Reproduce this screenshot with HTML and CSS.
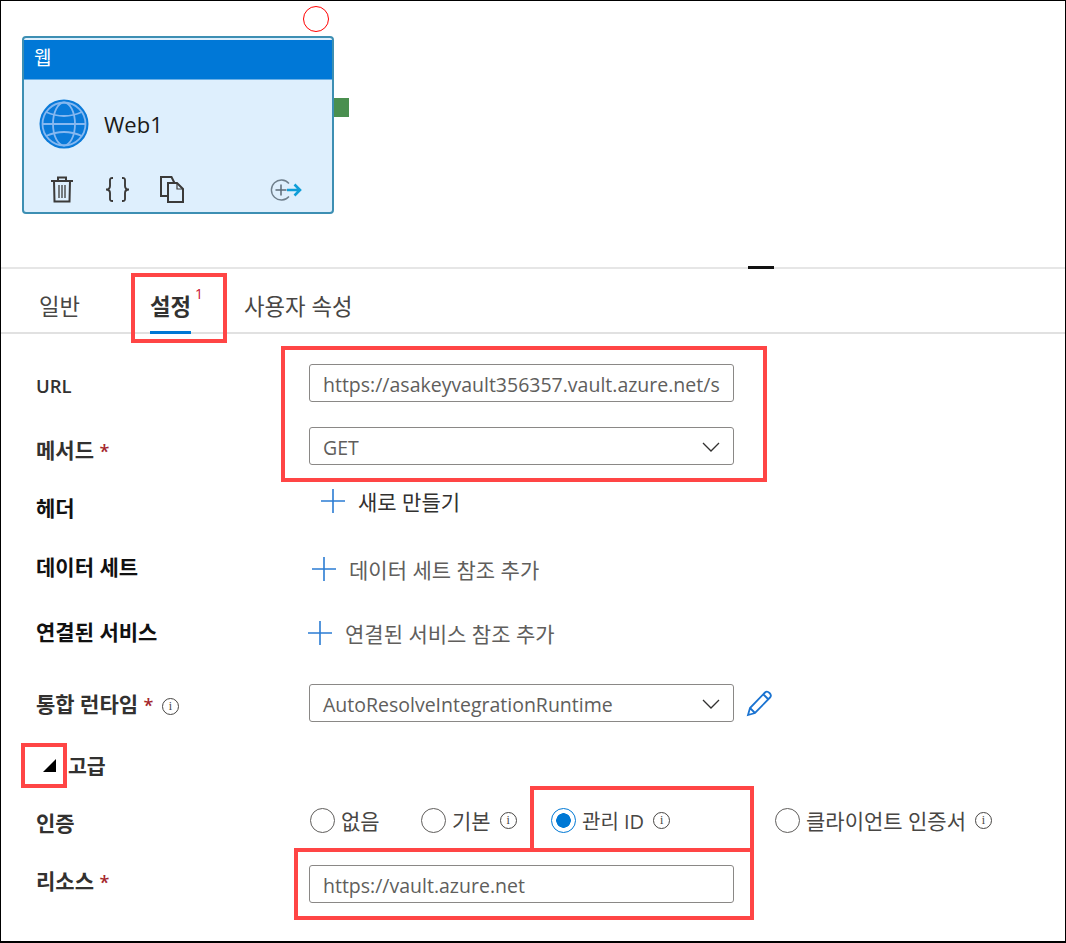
FILE: index.html
```html
<!DOCTYPE html>
<html lang="ko">
    <head>
        <meta charset="UTF-8" />
        <meta name="viewport" content="width=device-width, initial-scale=1.0" />
        <title>Web1</title>
        <link rel="stylesheet" href="styles.css">
    </head>
    <body>
        <div class="frame">
            <!-- pipeline canvas -->
            <div class="canvas">
                <div class="status-ring"></div>
                <div class="node">
                    <div class="node-head">웹</div>
                    <div class="node-main">
                        <svg class="globe" width="50" height="50" viewBox="0 0 50 50">
                            <circle cx="25" cy="25" r="24.500" fill="#0a7ad9"/>
                            <g fill="none" stroke="#86b8f0" stroke-width="1.800">
                                <circle cx="25" cy="25" r="21.500"/>
                                <ellipse cx="25" cy="25" rx="11" ry="21.500"/>
                                <path d="M3.500 25h43M7 13q18 8 36 0M7 37q18-8 36 0"/>
                            </g>
                        </svg>
                        <span class="node-name">Web1</span>
                    </div>
                    <div class="node-tools">
                        <svg class="tool-trash" width="22" height="27" viewBox="0 0 22 27" fill="none" stroke="#3b3a39" stroke-width="2">
                            <path d="M0 5h22M7 5V1.500h8V5M3 5l.5 20.500h15L19 5"/>
                            <path d="M8 9v13M11 9v13M14 9v13" stroke-width="1.300"/>
                        </svg>
                        <svg class="tool-code" width="25" height="25" viewBox="0 0 25 25" fill="none" stroke="#3b3a39" stroke-width="1.900">
                            <path d="M8 1H7C4.500 1 5 3 5 6v3c0 2-1 3.500-4 3.500 3 0 4 1.500 4 3.500v3c0 3-.5 5 2 5h1M17 1h1c2.500 0 2 2 2 5v3c0 2 1 3.500 4 3.500-3 0-4 1.500-4 3.500v3c0 3 .5 5-2 5h-1"/>
                        </svg>
                        <svg class="tool-copy" width="25" height="27" viewBox="0 0 25 27" fill="none" stroke="#3b3a39" stroke-width="2">
                            <path d="M8 20H1V1h10.500l3 6M8 7h9l6 6v13H8z"/>
                            <path d="M17 7v6h6" stroke-width="1.200"/>
                        </svg>
                        <svg class="tool-add" width="34" height="24" viewBox="0 0 34 24" fill="none">
                            <path d="M19 5.500A10 10 0 1 0 19 18.500" stroke="#6f7f8c" stroke-width="1.400"/>
                            <path d="M5.500 12h11M11 6.500v11" stroke="#5c6b77" stroke-width="1.500"/>
                            <path d="M17 12h13M24.500 6.500l5.500 5.500-5.500 5.500" stroke="#0f9ed8" stroke-width="2.600"/>
                        </svg>
                    </div>
                    <div class="node-port"></div>
                </div>
                <div class="splitter-handle"></div>
            </div>

            <div class="tabs">
                <span class="tab">일반</span>
                <span class="tab tab-active">설정<sup class="tab-badge">1</sup></span>
                <span class="tab">사용자 속성</span>
            </div>

            <div class="form">
                <div class="row row-url">
                    <label class="field-label">URL</label>
                    <div class="field">
                        <div class="box">https://asakeyvault356357.vault.azure.net/s</div>
                    </div>
                </div>
                <div class="row row-method">
                    <label class="field-label">메서드 <span class="req">*</span></label>
                    <div class="field">
                        <div class="box">GET
                            <svg class="chevron" width="18" height="10" viewBox="0 0 18 10"><path d="M1 1l8 8 8-8" fill="none" stroke="#323130" stroke-width="1.300"/></svg>
                        </div>
                    </div>
                </div>
                <div class="row row-header">
                    <label class="field-label strong">헤더</label>
                    <div class="add-link add-dark">
                        <svg class="plus" width="24" height="24" viewBox="0 0 24 24"><path d="M0 12h24M12 0v24" stroke="#2b7cd3" stroke-width="1.600"/></svg>
                        새로 만들기
                    </div>
                </div>
                <div class="row row-dataset">
                    <label class="field-label strong">데이터 세트</label>
                    <div class="add-link">
                        <svg class="plus" width="24" height="24" viewBox="0 0 24 24"><path d="M0 12h24M12 0v24" stroke="#2b7cd3" stroke-width="1.600"/></svg>
                        데이터 세트 참조 추가
                    </div>
                </div>
                <div class="row row-linked">
                    <label class="field-label strong">연결된 서비스</label>
                    <div class="add-link">
                        <svg class="plus" width="24" height="24" viewBox="0 0 24 24"><path d="M0 12h24M12 0v24" stroke="#2b7cd3" stroke-width="1.600"/></svg>
                        연결된 서비스 참조 추가
                    </div>
                </div>
                <div class="row row-runtime">
                    <label class="field-label">통합 런타임 <span class="req">*</span> <i class="info">i</i></label>
                    <div class="field">
                        <div class="box">AutoResolveIntegrationRuntime
                            <svg class="chevron" width="18" height="10" viewBox="0 0 18 10"><path d="M1 1l8 8 8-8" fill="none" stroke="#323130" stroke-width="1.300"/></svg>
                        </div>
                        <svg class="pencil" width="28" height="28" viewBox="0 0 28 28" fill="none" stroke="#1a73d1" stroke-width="1.800">
                            <path d="M2 26l2-7L19 3.500q2-2 4.500.5t.5 4.500L9 24zM4 19l5 5M17.500 5.500l5 5"/>
                        </svg>
                    </div>
                </div>
                <div class="row row-advanced">
                    <div class="advanced-title"><span class="caret"></span>고급</div>
                </div>
                <div class="row row-auth">
                    <label class="field-label">인증</label>
                    <div class="radios">
                        <span class="radio-item item-none"><span class="radio"></span>없음</span>
                        <span class="radio-item item-basic"><span class="radio"></span>기본 <i class="info">i</i></span>
                        <span class="radio-item item-managed"><span class="radio radio-on"></span>관리 ID <i class="info">i</i></span>
                        <span class="radio-item"><span class="radio"></span>클라이언트 인증서 <i class="info">i</i></span>
                    </div>
                </div>
                <div class="row row-resource">
                    <label class="field-label">리소스 <span class="req">*</span></label>
                    <div class="field">
                        <div class="box">https://vault.azure.net</div>
                    </div>
                </div>
            </div>

            <!-- callouts drawn over the screenshot -->
            <div class="callout callout-tab"></div>
            <div class="callout callout-url"></div>
            <div class="callout callout-caret"></div>
            <div class="callout callout-managed"></div>
            <div class="callout callout-resource"></div>
        </div>
    </body>
</html>
```

FILE: styles.css
```css
* {
    box-sizing: border-box;
}

body {
    margin: 0;
    background-color: white;
    font-family: "Open Sans", "Noto Sans CJK KR", sans-serif;
    color: #323130;
}

.frame {
    position: relative;
    width: 1066px;
    height: 943px;
    border: 1px solid #000;
    border-bottom-width: 2px;
    overflow: hidden;
}

.canvas {
    position: relative;
    height: 266px;
}

.status-ring {
    position: absolute;
    left: 302px;
    top: 5px;
    width: 26px;
    height: 26px;
    border: 1.500px solid #f00;
    border-radius: 50%;
}

.node {
    position: absolute;
    left: 21px;
    top: 35px;
    width: 312px;
    height: 178px;
    border: 2px solid #3d8fb3;
    border-radius: 4px;
    background-color: #deeffd;
}

.node-head {
    height: 40px;
    margin-top: 2px;
    padding-left: 10px;
    background-color: #0078d7;
    color: white;
    font-size: 19px;
    line-height: 36px;
    border-bottom: 1px solid #6cb0e6;
}

.node-main {
    display: flex;
    align-items: center;
    height: 88px;
    padding-left: 15px;
}

.node-name {
    margin-left: 15px;
    font-size: 22px;
    color: #1b1a19;
}

.node-tools {
    display: flex;
    align-items: center;
    margin-top: 8px;
    padding-left: 27px;
}

.tool-trash {
    margin-right: 32px;
}

.tool-code {
    margin-right: 30px;
}

.tool-copy {
    margin-right: 85px;
}

.node-port {
    position: absolute;
    left: 310px;
    top: 60px;
    width: 15px;
    height: 19px;
    background-color: #4a8f4f;
}

.splitter-handle {
    position: absolute;
    left: 747px;
    top: 265px;
    width: 26px;
    height: 3px;
    background-color: #111;
}

.tabs {
    display: flex;
    height: 67px;
    padding-left: 38px;
    border-top: 2px solid #e6e6e6;
    border-bottom: 2px solid #e1e1e1;
    font-size: 22.300px;
    line-height: 76px;
    color: #484644;
}

.tab {
    margin-right: 53px;
}

.tab-active {
    position: relative;
    margin-left: 17px;
    height: 65px;
    font-weight: 700;
    color: #323130;
    box-shadow: inset 0 -3px 0 #0078d4;
}

.tab-badge {
    position: absolute;
    left: 45px;
    top: -13px;
    font-size: 14px;
    font-weight: 400;
    color: #c8102e;
}

.form {
    display: flex;
    flex-direction: column;
    padding-top: 30px;
    padding-left: 35px;
}

.row {
    display: flex;
    align-items: center;
    height: 38px;
}

.row-method {
    margin-top: 25px;
}

.row-header {
    margin-top: 17px;
}

.row-dataset {
    margin-top: 30px;
}

.row-linked {
    margin-top: 26px;
}

.row-runtime {
    margin-top: 32px;
}

.row-advanced {
    margin-top: 24px;
}

.row-auth {
    margin-top: 17px;
}

.row-resource {
    margin-top: 26px;
}

.field-label {
    width: 273px;
    flex-shrink: 0;
    font-size: 21px;
    font-weight: 600;
    color: #323130;
}

.strong {
    font-weight: 700;
    color: #111;
}

.row-url .field-label {
    padding-top: 4px;
    font-size: 18.500px;
}

.row-method .field-label {
    padding-top: 6px;
}

.row-header .field-label {
    padding-top: 12px;
}

.row-dataset .field-label {
    padding-bottom: 6px;
}

.row-linked .field-label {
    padding-bottom: 4px;
}

.row-resource .field-label {
    padding-bottom: 8px;
}

.row-auth .field-label {
    padding-top: 4px;
}

.req {
    color: #a4262c;
    font-size: 18px;
}

.field {
    display: flex;
    align-items: center;
}

.box {
    display: flex;
    align-items: center;
    justify-content: space-between;
    width: 425px;
    height: 38px;
    padding: 2px 13px 0;
    border: 1.500px solid #8a8886;
    border-radius: 3px;
    font-size: 19.500px;
    color: #605e5c;
    white-space: nowrap;
    overflow: hidden;
}

.pencil {
    margin-left: 12px;
}

.add-link {
    display: flex;
    align-items: center;
    gap: 13px;
    font-size: 21px;
    color: #605e5c;
}

.add-dark {
    margin-left: 12px;
    color: #323130;
}

.row-dataset .add-link {
    margin-left: 3px;
}

.row-linked .add-link {
    margin-left: -1px;
}

.info {
    display: inline-flex;
    align-items: center;
    justify-content: center;
    width: 17px;
    height: 17px;
    margin-left: 3px;
    border: 1px solid #484644;
    border-radius: 50%;
    font-family: "Liberation Serif", serif;
    font-size: 12px;
    font-weight: 400;
    font-style: normal;
    vertical-align: 2px;
    color: #484644;
}

.advanced-title {
    display: flex;
    align-items: center;
    font-size: 20.500px;
    font-weight: 700;
    color: #323130;
}

.caret {
    width: 0;
    height: 0;
    margin: 0 12px 0 7px;
    border-style: solid;
    border-width: 0 0 13px 13px;
    border-color: transparent transparent #000 transparent;
}

.radios {
    display: flex;
    align-items: center;
    margin-left: 1px;
    font-size: 21px;
    color: #484644;
}

.radio-item {
    display: flex;
    align-items: center;
    gap: 6px;
}

.item-none {
    width: 111px;
}

.item-basic {
    width: 130px;
}

.item-managed {
    width: 224px;
    font-size: 20px;
}

.radio {
    width: 25px;
    height: 25px;
    border: 1.300px solid #605e5c;
    border-radius: 50%;
    background-color: white;
}

.radio-on {
    border-color: #0078d4;
    background-image: radial-gradient(circle, #0078d4 0, #0078d4 7px, transparent 7.500px);
}

.callout {
    position: absolute;
    border: 4px solid #ff4545;
}

.callout-tab {
    left: 130px;
    top: 272px;
    width: 96px;
    height: 70px;
}

.callout-url {
    left: 280px;
    top: 345px;
    width: 486px;
    height: 136px;
}

.callout-caret {
    left: 20px;
    top: 742px;
    width: 46px;
    height: 45px;
}

.callout-managed {
    left: 529px;
    top: 785px;
    width: 224px;
    height: 66px;
}

.callout-resource {
    left: 293px;
    top: 847px;
    width: 460px;
    height: 72px;
}
```
